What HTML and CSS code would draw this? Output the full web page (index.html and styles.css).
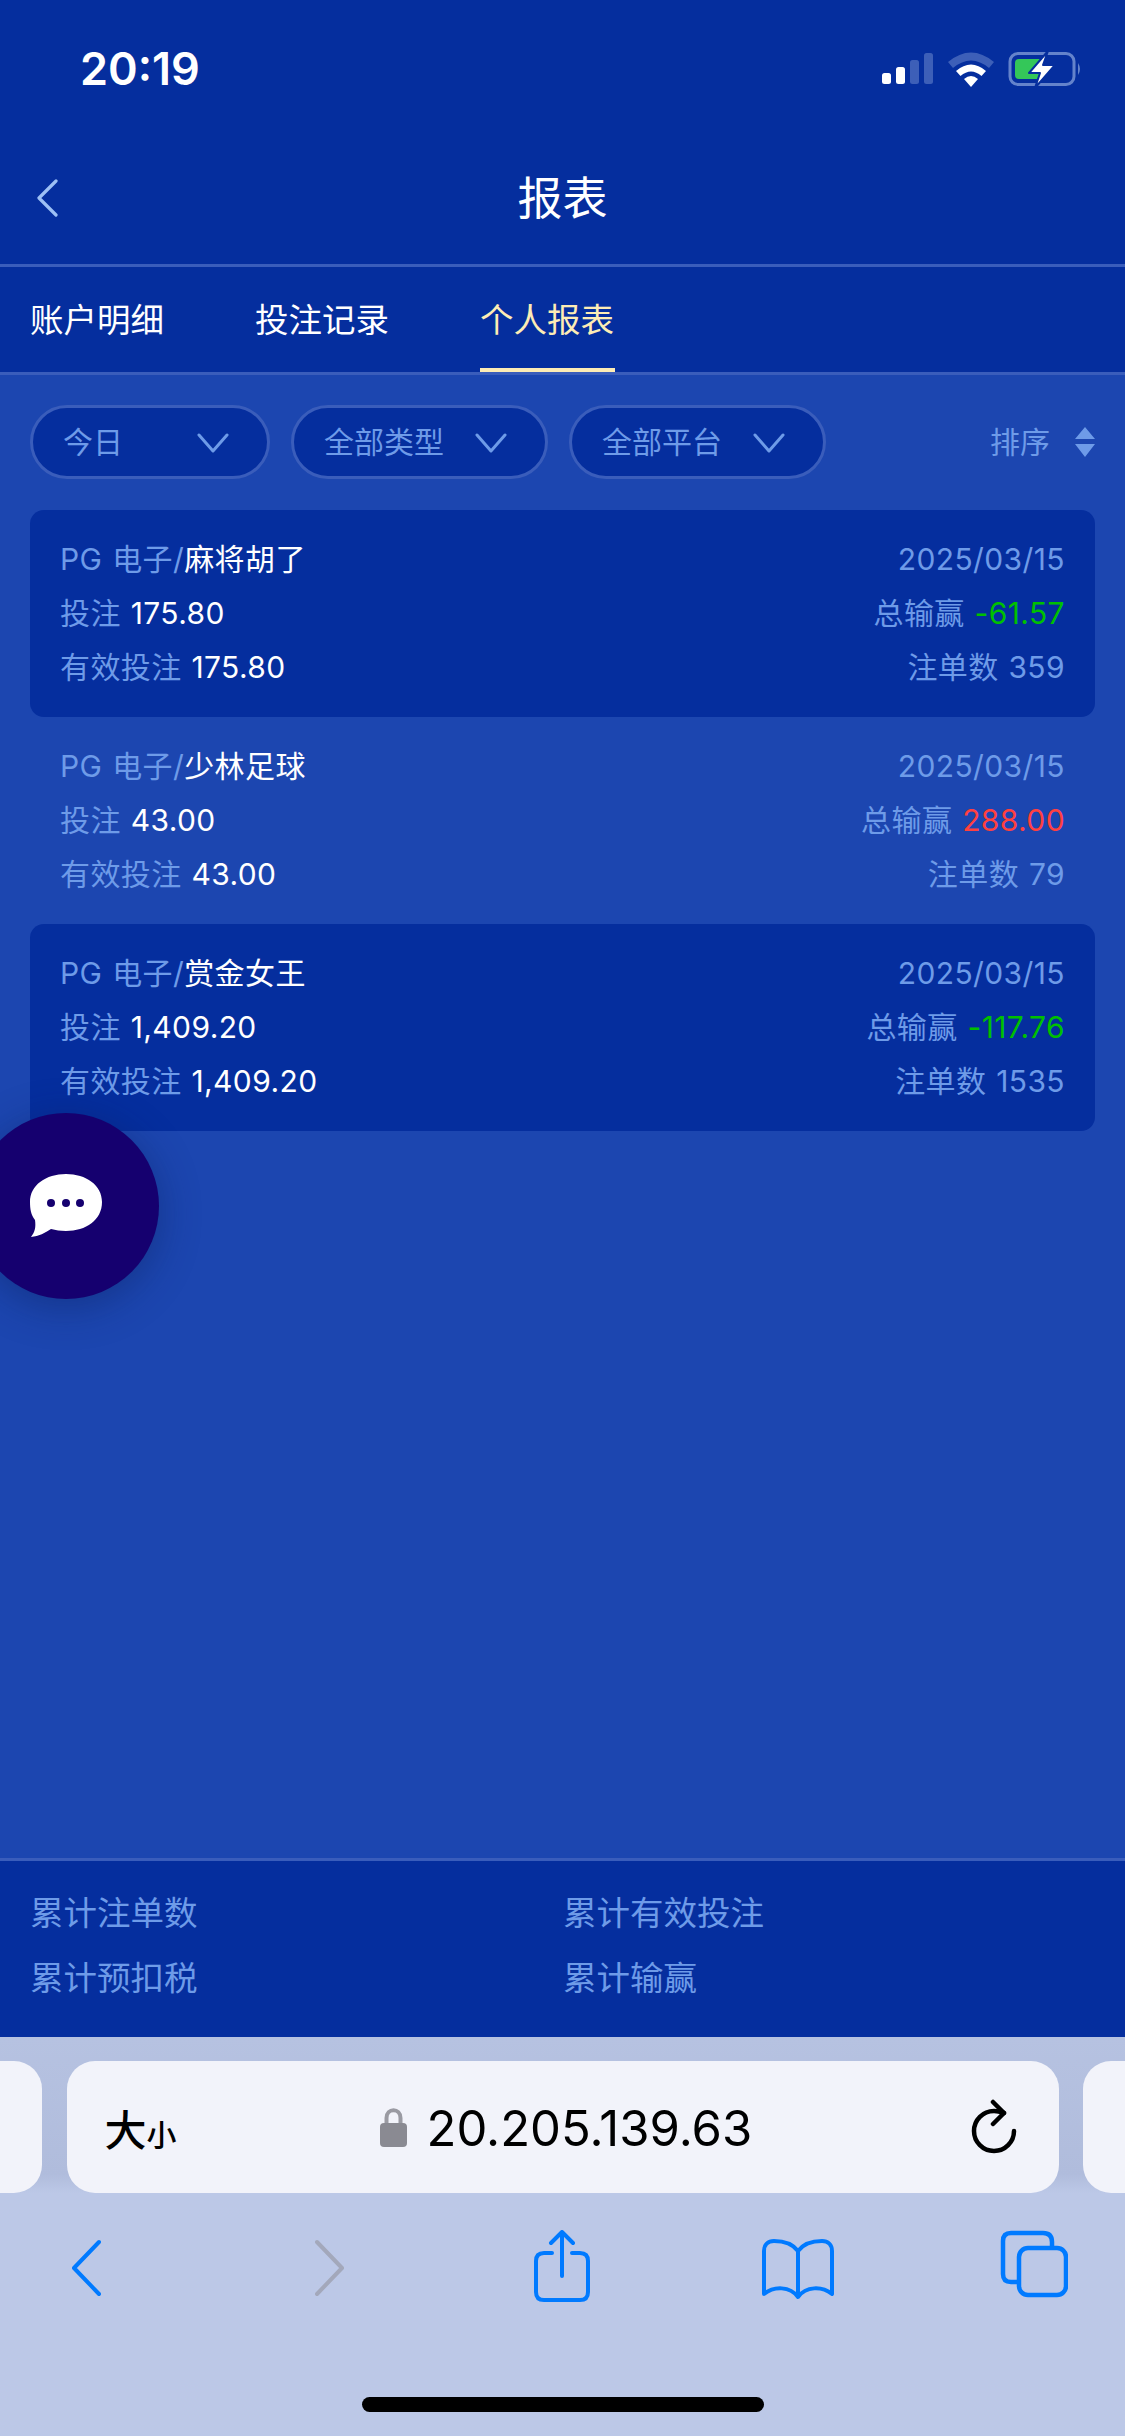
FILE: index.html
```html
<!DOCTYPE html>
<html lang="zh-CN">
<head>
<meta charset="utf-8">
<title>报表</title>
<link rel="stylesheet" href="styles.css">
</head>
<body>
<div class="page">
  <header class="top">
    <div class="status">
      <span class="time">20:19</span>
      <svg class="status-icons" width="200" height="38" viewBox="0 0 200 38">
        <rect x="0" y="23" width="9" height="11" rx="2.5" fill="#fff"/>
        <rect x="14" y="17" width="9" height="17" rx="2.5" fill="#fff"/>
        <rect x="28" y="10" width="9" height="24" rx="2.5" fill="#3d5fb8"/>
        <rect x="42" y="3" width="9" height="31" rx="2.5" fill="#3d5fb8"/>
        <path d="M66 12 Q89 -7 112 12 L107 18 Q89 3 71 18Z" fill="#3d5fb8"/>
        <path d="M74 21 Q89 8 104 21 L99.500 26 Q89 17 78.500 26Z" fill="#fff"/>
        <path d="M82 29 Q89 23 96 29 L89 37Z" fill="#fff"/>
        <rect x="128" y="3.500" width="64" height="31" rx="8" fill="none" stroke="#6483cb" stroke-width="3"/>
        <path d="M196 13 Q200 19 196 25Z" fill="#6483cb"/>
        <rect x="133" y="9" width="28" height="20" rx="4" fill="#34c759"/>
        <path d="M166 1 L147 23 H158 L153 38 L173 15 H161 Z" fill="#fff" stroke="#052e9e" stroke-width="2" stroke-linejoin="round"/>
      </svg>
    </div>
    <div class="nav">
      <svg class="nav-back" width="24" height="38" viewBox="0 0 24 38"><path d="M21 2 L4 19 L21 36" fill="none" stroke="#9dc0f5" stroke-width="3.200" stroke-linecap="round" stroke-linejoin="round"/></svg>
      <h1 class="title">报表</h1>
    </div>
    <nav class="tabs">
      <span class="tab">账户明细</span>
      <span class="tab">投注记录</span>
      <span class="tab tab-active">个人报表</span>
    </nav>
  </header>

  <main class="content">
    <div class="filters">
      <div class="pill pill-short"><span>今日</span><svg class="chev" width="32" height="20" viewBox="0 0 32 20"><path d="M2 2 L16 18 L30 2" fill="none" stroke="#6e9be8" stroke-width="3" stroke-linecap="round" stroke-linejoin="round"/></svg></div>
      <div class="pill"><span>全部类型</span><svg class="chev" width="32" height="20" viewBox="0 0 32 20"><path d="M2 2 L16 18 L30 2" fill="none" stroke="#6e9be8" stroke-width="3" stroke-linecap="round" stroke-linejoin="round"/></svg></div>
      <div class="pill"><span>全部平台</span><svg class="chev" width="32" height="20" viewBox="0 0 32 20"><path d="M2 2 L16 18 L30 2" fill="none" stroke="#6e9be8" stroke-width="3" stroke-linecap="round" stroke-linejoin="round"/></svg></div>
      <div class="sort">
        <span>排序</span>
        <svg width="20" height="30" viewBox="0 0 20 30"><path d="M10 0 L20 12 H0Z M0 17 H20 L10 30Z" fill="#6e9be8"/></svg>
      </div>
    </div>

    <section class="list">
      <article class="row row-dark">
        <div class="col">
          <div class="line">PG 电子/<b>麻将胡了</b></div>
          <div class="line">投注 <b>175.80</b></div>
          <div class="line">有效投注 <b>175.80</b></div>
        </div>
        <div class="col col-right">
          <div class="line">2025/03/15</div>
          <div class="line">总输赢 <span class="lose">-61.57</span></div>
          <div class="line">注单数 359</div>
        </div>
      </article>
      <article class="row">
        <div class="col">
          <div class="line">PG 电子/<b>少林足球</b></div>
          <div class="line">投注 <b>43.00</b></div>
          <div class="line">有效投注 <b>43.00</b></div>
        </div>
        <div class="col col-right">
          <div class="line">2025/03/15</div>
          <div class="line">总输赢 <span class="win">288.00</span></div>
          <div class="line">注单数 79</div>
        </div>
      </article>
      <article class="row row-dark">
        <div class="col">
          <div class="line">PG 电子/<b>赏金女王</b></div>
          <div class="line">投注 <b>1,409.20</b></div>
          <div class="line">有效投注 <b>1,409.20</b></div>
        </div>
        <div class="col col-right">
          <div class="line">2025/03/15</div>
          <div class="line">总输赢 <span class="lose">-117.76</span></div>
          <div class="line">注单数 1535</div>
        </div>
      </article>
    </section>

    <div class="chat">
      <svg width="74" height="66" viewBox="0 0 74 66">
        <path d="M37 1 C57 1 73 12 73 29 C73 47 57 58 37 58 C31 58 27 57 22 56 C16 60 10 63 2 64 C6 59 7 54 6 47 C2 42 1 36 1 29 C1 12 17 1 37 1Z" fill="#fff"/>
        <circle cx="22" cy="30" r="4" fill="#15006f"/>
        <circle cx="37" cy="30" r="4" fill="#15006f"/>
        <circle cx="51" cy="30" r="4" fill="#15006f"/>
      </svg>
    </div>
  </main>

  <footer class="totals">
    <div>累计注单数</div>
    <div>累计有效投注</div>
    <div>累计预扣税</div>
    <div>累计输赢</div>
  </footer>

  <div class="browser">
    <div class="address-row">
      <div class="side-tab side-left"></div>
      <div class="address">
        <span class="aa"><span class="aa-big">大</span><span class="aa-small">小</span></span>
        <span class="host">
          <svg width="27" height="40" viewBox="0 0 27 40"><path d="M6.500 18 V11 C6.500 0.500 20.500 0.500 20.500 11 V18" fill="none" stroke="#9a9aa2" stroke-width="4"/><rect x="0" y="16" width="27" height="24" rx="4" fill="#8a8a92"/></svg>
          <span class="url">20.205.139.63</span>
        </span>
        <svg width="46" height="56" viewBox="0 0 46 56"><path d="M33 14 C30 13 27 12 23 12 A20 20 0 1 0 43 32" fill="none" stroke="#000" stroke-width="4.500" stroke-linecap="round"/><path d="M22 3 L33 14 L22 25" fill="none" stroke="#000" stroke-width="4.500" stroke-linecap="round" stroke-linejoin="round"/></svg>
      </div>
      <div class="side-tab side-right"></div>
    </div>
    <div class="toolbar">
      <svg width="30" height="72" viewBox="0 -10 30 72"><path d="M28 2 L3 28 L28 54" fill="none" stroke="#007aff" stroke-width="4" stroke-linecap="round" stroke-linejoin="round"/></svg>
      <svg width="30" height="72" viewBox="0 -10 30 72"><path d="M2 2 L27 28 L2 54" fill="none" stroke="#a3a8bb" stroke-width="4" stroke-linecap="round" stroke-linejoin="round"/></svg>
      <svg width="56" height="72" viewBox="0 0 56 72"><path d="M18 23 H10 Q2 23 2 31 V62 Q2 70 10 70 H46 Q54 70 54 62 V31 Q54 23 46 23 H38" fill="none" stroke="#007aff" stroke-width="4" stroke-linecap="round"/><path d="M28 46 V3 M17 13 L28 2 L39 13" fill="none" stroke="#007aff" stroke-width="4" stroke-linecap="round" stroke-linejoin="round"/></svg>
      <svg width="72" height="72" viewBox="0 -9 72 72"><path d="M36 12 C30 4 20 2 12 2 C6 2 2 6 2 12 V55 C12 47 28 47 36 58 C44 47 60 47 70 55 V12 C70 6 66 2 60 2 C52 2 42 4 36 12 V58" fill="none" stroke="#007aff" stroke-width="4" stroke-linecap="round" stroke-linejoin="round"/></svg>
      <svg width="68" height="72" viewBox="0 -1 68 72"><path d="M18 51 H11 Q3 51 3 43 V10 Q3 2 11 2 H43 Q52 2 52 11 V16" fill="none" stroke="#007aff" stroke-width="4.500"/><rect x="19" y="17" width="47" height="47" rx="9" fill="none" stroke="#007aff" stroke-width="4.500"/></svg>
    </div>
    <div class="home-row"><div class="home"></div></div>
  </div>
</div>
</body>
</html>
```

FILE: styles.css
```css
* { box-sizing: border-box; }
html, body { margin: 0; padding: 0; }
body { width: 1125px; height: 2436px; overflow: hidden; font-family: Inter, "Noto Sans CJK SC", sans-serif; }
.page { width: 1125px; height: 2436px; display: flex; flex-direction: column; overflow: hidden; }

.top { background: #052e9e; color: #fff; }
.status { height: 136px; padding: 49px 43px 0 80px; display: flex; justify-content: space-between; align-items: flex-start; }
.time { font-size: 45px; line-height: 40px; font-weight: 600; }
.status-icons { margin-top: 1px; }
.nav { height: 131px; display: flex; align-items: center; justify-content: center; position: relative; border-bottom: 3px solid #3a5dbb; }
.nav-back { position: absolute; left: 35px; top: 43px; }
.title { margin: 0; font-size: 45px; font-weight: 400; line-height: 60px; position: relative; top: -1px; }
.tabs { height: 108px; display: flex; gap: 90px; padding-left: 30px; border-bottom: 3px solid #3a5dbb; }
.tab { font-size: 33.500px; line-height: 106px; height: 105px; width: 135px; white-space: nowrap; }
.tab-active { color: #fdecb5; border-bottom: 4px solid #fdecb5; }

.content { flex: 1; background: #1c46b0; position: relative; padding: 30px 30px 0; }
.filters { display: flex; align-items: center; gap: 21px; height: 74px; color: #6e9be8; font-size: 30px; line-height: 70px; }
.pill { width: 257px; height: 74px; border-radius: 37px; border: 3px solid #3a5dbb; background: #052e9e; display: flex; align-items: center; justify-content: space-between; padding: 0 38px 0 30px; white-space: nowrap; }
.pill-short { width: 240px; }
.chev { flex: none; margin-top: 2px; }
.sort { margin-left: auto; display: flex; align-items: center; gap: 25px; }

.list { margin-top: 31px; display: flex; flex-direction: column; }
.row { height: 207px; padding: 22px 30px 0; display: flex; justify-content: space-between; border-radius: 14px; font-size: 30px; line-height: 54px; color: #6e9be8; letter-spacing: 0.4px; word-spacing: 1px; }
.row-dark { background: #052e9e; }
.col-right { text-align: right; }
.line { white-space: nowrap; }
.line b { font-weight: 400; color: #fff; }
.lose { color: #00c000; }
.win { color: #ff4040; }

.chat { position: absolute; left: -27px; top: 738px; width: 186px; height: 186px; border-radius: 50%; background: #15006f; box-shadow: 0 8px 40px rgba(10, 30, 90, 0.45); display: flex; align-items: center; justify-content: center; }

.totals { height: 179px; background: #052e9e; border-top: 3px solid #3a5dbb; padding: 17px 0 0 30px; display: grid; grid-template-columns: 533px 1fr; grid-auto-rows: 65px; align-items: center; font-size: 33.500px; color: #6e9be8; }

.browser { height: 399px; background: #bcc8e7; display: flex; flex-direction: column; }
.address-row { height: 156px; padding-top: 24px; display: flex; justify-content: space-between; background: linear-gradient(#b6c2e1, #b0bcdc 88%, #bcc8e7); }
.side-tab { width: 42px; height: 132px; background: #f2f3fa; }
.side-left { border-radius: 0 28px 28px 0; }
.side-right { border-radius: 28px 0 0 28px; }
.address { width: 992px; height: 132px; background: #f2f3fa; border-radius: 28px; display: flex; align-items: center; justify-content: space-between; padding: 0 42px 0 38px; position: relative; color: #000; }
.aa { display: flex; align-items: baseline; font-weight: 500; }
.aa-big { font-size: 42px; }
.aa-small { font-size: 30px; }
.host { position: absolute; left: 313px; top: 46px; display: flex; align-items: center; gap: 22px; }
.url { font-size: 49px; line-height: 40px; position: relative; top: 2px; left: -2px; }
.toolbar { height: 204px; display: grid; grid-template-columns: 172px 316px 148px 324px 148px; justify-items: center; align-items: center; align-content: start; grid-auto-rows: 72px; padding-top: 37px; }
.home-row { height: 39px; display: flex; justify-content: center; }
.home { width: 402px; height: 15px; border-radius: 8px; background: #000; }
```
